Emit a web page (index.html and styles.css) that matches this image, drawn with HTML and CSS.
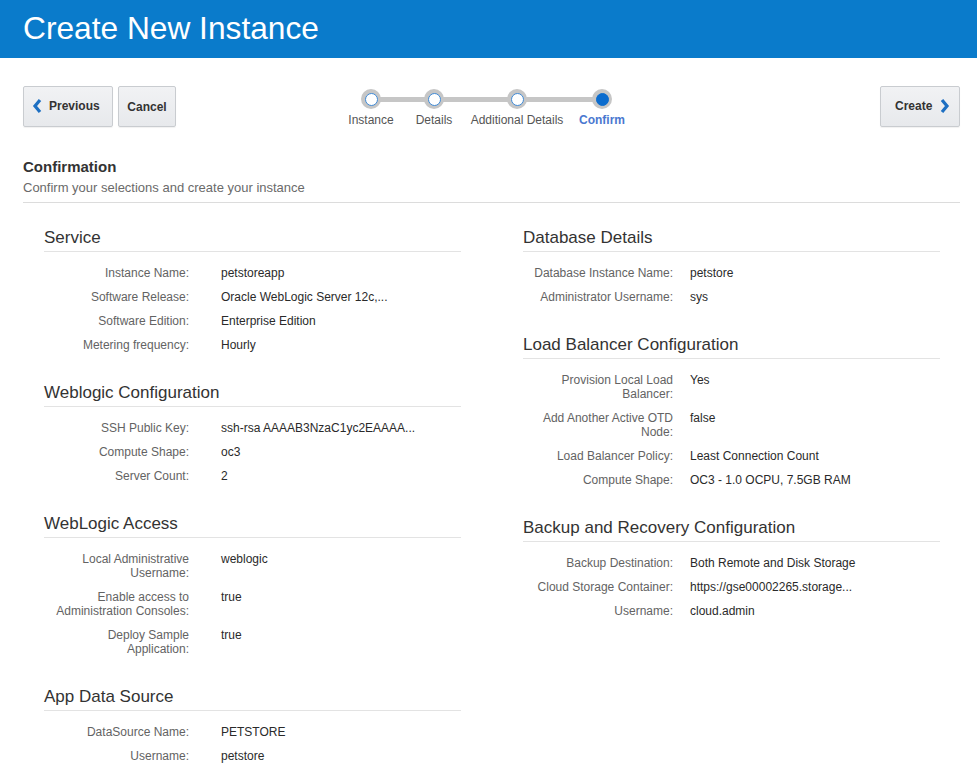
FILE: index.html
```html
<!DOCTYPE html>
<html lang="en">
<head>
<meta charset="utf-8">
<title>Create New Instance</title>
<link rel="stylesheet" href="styles.css">
</head>
<body>
<header class="titlebar"><h1 class="title">Create New Instance</h1></header>
<main class="content">
  <div class="toolbar">
    <div class="btn-group">
      <button class="btn btn-prev"><svg class="chev" width="10" height="16" viewBox="0 0 10 16"><path d="M8 2 L3 8 L8 14" fill="none" stroke="#1d6fc2" stroke-width="3.2"/></svg>Previous</button>
      <button class="btn btn-cancel">Cancel</button>
    </div>
    <div class="train">
      <div class="train-line"></div>
      <div class="step"><span class="dot"><span class="inner"></span></span><span class="step-label">Instance</span></div>
      <div class="step"><span class="dot"><span class="inner"></span></span><span class="step-label">Details</span></div>
      <div class="step"><span class="dot"><span class="inner"></span></span><span class="step-label">Additional Details</span></div>
      <div class="step current"><span class="dot"><span class="inner"></span></span><span class="step-label">Confirm</span></div>
    </div>
    <div class="btn-group end">
      <button class="btn btn-next">Create<svg class="chev" width="10" height="16" viewBox="0 0 10 16"><path d="M2 2 L7 8 L2 14" fill="none" stroke="#1d6fc2" stroke-width="3.2"/></svg></button>
    </div>
  </div>

  <div class="intro">
    <h2 class="intro-title">Confirmation</h2>
    <p class="intro-sub">Confirm your selections and create your instance</p>
  </div>

  <div class="columns">
    <div class="col col-left">
      <section class="section">
        <h3 class="sec-title">Service</h3>
        <div class="kv"><span class="k">Instance Name:</span><span class="v">petstoreapp</span></div>
        <div class="kv"><span class="k">Software Release:</span><span class="v">Oracle WebLogic Server 12c,...</span></div>
        <div class="kv"><span class="k">Software Edition:</span><span class="v">Enterprise Edition</span></div>
        <div class="kv"><span class="k">Metering frequency:</span><span class="v">Hourly</span></div>
      </section>
      <section class="section">
        <h3 class="sec-title">Weblogic Configuration</h3>
        <div class="kv"><span class="k">SSH Public Key:</span><span class="v">ssh-rsa AAAAB3NzaC1yc2EAAAA...</span></div>
        <div class="kv"><span class="k">Compute Shape:</span><span class="v">oc3</span></div>
        <div class="kv"><span class="k">Server Count:</span><span class="v">2</span></div>
      </section>
      <section class="section">
        <h3 class="sec-title">WebLogic Access</h3>
        <div class="kv"><span class="k">Local Administrative Username:</span><span class="v">weblogic</span></div>
        <div class="kv"><span class="k">Enable access to Administration Consoles:</span><span class="v">true</span></div>
        <div class="kv"><span class="k">Deploy Sample Application:</span><span class="v">true</span></div>
      </section>
      <section class="section">
        <h3 class="sec-title">App Data Source</h3>
        <div class="kv"><span class="k">DataSource Name:</span><span class="v">PETSTORE</span></div>
        <div class="kv"><span class="k">Username:</span><span class="v">petstore</span></div>
      </section>
    </div>
    <div class="col col-right">
      <section class="section">
        <h3 class="sec-title">Database Details</h3>
        <div class="kv"><span class="k">Database Instance Name:</span><span class="v">petstore</span></div>
        <div class="kv"><span class="k">Administrator Username:</span><span class="v">sys</span></div>
      </section>
      <section class="section">
        <h3 class="sec-title">Load Balancer Configuration</h3>
        <div class="kv"><span class="k">Provision Local Load Balancer:</span><span class="v">Yes</span></div>
        <div class="kv"><span class="k">Add Another Active OTD Node:</span><span class="v">false</span></div>
        <div class="kv"><span class="k">Load Balancer Policy:</span><span class="v">Least Connection Count</span></div>
        <div class="kv"><span class="k">Compute Shape:</span><span class="v">OC3 - 1.0 OCPU, 7.5GB RAM</span></div>
      </section>
      <section class="section">
        <h3 class="sec-title">Backup and Recovery Configuration</h3>
        <div class="kv"><span class="k">Backup Destination:</span><span class="v">Both Remote and Disk Storage</span></div>
        <div class="kv"><span class="k">Cloud Storage Container:</span><span class="v">https://gse00002265.storage...</span></div>
        <div class="kv"><span class="k">Username:</span><span class="v">cloud.admin</span></div>
      </section>
    </div>
  </div>
</main>
</body>
</html>
```

FILE: styles.css
```css
* { box-sizing: border-box; }
html, body { margin: 0; padding: 0; background: #ffffff; }
body {
  font-family: "Liberation Sans", Arial, sans-serif;
  color: #333333;
  overflow: hidden;
}

.titlebar {
  background: #0a7bcb;
  height: 58px;
  padding-left: 23px;
}
.title {
  margin: 0;
  font-size: 31.7px;
  line-height: 56px;
  font-weight: normal;
  color: #ffffff;
}

.content {
  padding: 28px 17px 0 23px;
}

.toolbar {
  display: grid;
  grid-template-columns: 1fr auto 1fr;
  align-items: start;
  height: 42px;
}
.btn-group { display: flex; gap: 5px; }
.btn-group.end { justify-content: flex-end; }

.btn {
  height: 41px;
  border: 1px solid #c9ccd0;
  border-radius: 2px;
  background: linear-gradient(#f1f2f4, #e7e9ec);
  box-shadow: 0 1px 1px rgba(0,0,0,0.06);
  font-family: "Liberation Sans", Arial, sans-serif;
  font-size: 12px;
  font-weight: bold;
  color: #333333;
  display: flex;
  align-items: center;
  padding: 0;
  cursor: pointer;
}
.btn-prev { width: 90px; padding-left: 8px; padding-bottom: 2px; }
.btn-prev .chev { margin-right: 7px; margin-top: 1px; }
.btn-cancel { width: 58px; justify-content: center; padding-top: 1px; }
.btn-next { width: 80px; padding-left: 14px; padding-bottom: 2px; }
.btn-next .chev { margin-left: 8px; margin-top: 1px; }

.train {
  position: relative;
  display: grid;
  grid-template-columns: 70px 56px 110px 60px;
  margin-right: 15px;
}
.train-line {
  position: absolute;
  left: 35px;
  right: 30px;
  top: 10.5px;
  height: 5px;
  background: #c6c6c6;
}
.step {
  position: relative;
  display: flex;
  flex-direction: column;
  align-items: center;
}
.dot {
  margin-top: 3px;
  width: 20px;
  height: 20px;
  border-radius: 50%;
  background: #c6c6c6;
  display: flex;
  align-items: center;
  justify-content: center;
}
.inner {
  width: 13px;
  height: 13px;
  border-radius: 50%;
  background: #ffffff;
  border: 1.5px solid #3f8ad6;
}
.step.current .inner {
  background: #0b6cce;
  border-color: #0b6cce;
}
.step-label {
  margin-top: 4px;
  font-size: 12px;
  line-height: 14px;
  color: #555555;
  white-space: nowrap;
}
.step.current .step-label {
  color: #4a78d0;
  font-weight: bold;
}

.intro {
  margin-top: 30px;
  border-bottom: 1px solid #dcdcdc;
  padding-bottom: 6px;
}
.intro-title {
  margin: 0;
  font-size: 15px;
  line-height: 18px;
  font-weight: bold;
  color: #333333;
}
.intro-sub {
  margin: 4px 0 0;
  font-size: 13px;
  line-height: 16px;
  color: #6a6a6a;
}

.columns {
  display: grid;
  grid-template-columns: 417px 417px;
  column-gap: 62px;
  padding-left: 21px;
  margin-top: 25px;
}

.section { margin-bottom: 26px; }
.sec-title {
  margin: 0 0 9px;
  font-size: 17px;
  line-height: 20px;
  font-weight: normal;
  color: #333333;
  padding-bottom: 3px;
  border-bottom: 1px solid #e3e3e3;
}

.kv {
  display: grid;
  grid-template-columns: 145px 1fr;
  column-gap: 32px;
  padding: 5px 0 5px;
  font-size: 12px;
  line-height: 14px;
}
.kv .k {
  text-align: right;
  color: #636363;
  padding-left: 5px;
}
.kv .v {
  color: #2a2a2a;
}
.col-right .kv {
  grid-template-columns: 150px 1fr;
  column-gap: 17px;
}
.col-right .kv .k { padding-left: 0; }
```
